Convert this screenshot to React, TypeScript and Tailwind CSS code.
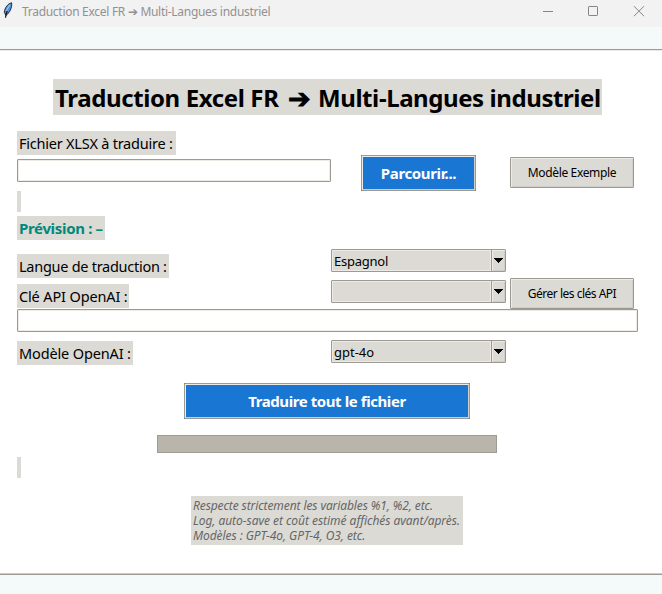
import React from "react";

function Label({ className, children }: { className: string; children?: React.ReactNode }) {
  return (
    <div className={`h-6 shrink-0 whitespace-nowrap bg-[#dcdad5] pl-[2px] leading-[24px] ${className}`}>
      {children}
    </div>
  );
}

function Entry({ className }: { className: string }) {
  return (
    <div className={`h-[23px] shrink-0 rounded-[1px] border border-[#9e9a91] ${className}`}>
      <div className="h-full border border-[#eeebe7] bg-white" />
    </div>
  );
}

function Combo({ children, className = "" }: { children?: React.ReactNode; className?: string }) {
  return (
    <div className={`flex h-[23px] w-[175px] shrink-0 rounded-[1px] border border-[#9e9a91] bg-[#dcdad5] ${className}`}>
      <div className="w-[159px] whitespace-nowrap border border-[#eeebe7] pl-[1px] text-[13px] leading-[20px]">
        {children}
      </div>
      <div className="flex w-[14px] justify-center border-l border-[#9e9a91] pt-[8px] shadow-[inset_1px_1px_0_#eeebe7,inset_-1px_-1px_0_#cfcdc8]">
        <svg width="9" height="5" viewBox="0 0 9 5" shapeRendering="crispEdges">
          <path d="M0 0h9v1H8v1H7v1H6v1H5v1H4V4H3V3H2V2H1V1H0z" fill="#000" />
        </svg>
      </div>
    </div>
  );
}

function GreyButton({ className, children }: { className: string; children: React.ReactNode }) {
  return (
    <button className={`h-[31px] w-[124px] shrink-0 whitespace-nowrap rounded-[1px] border border-[#9e9a91] bg-[#dcdad5] text-[12px] leading-[29px] shadow-[inset_1px_1px_0_#eeebe7,inset_-1px_-1px_0_#cfcdc8] ${className}`}>
      {children}
    </button>
  );
}

function BlueButton({ className, children }: { className: string; children: React.ReactNode }) {
  return (
    <button className={`h-9 shrink-0 bg-[#1976d2] ${className}`}>
      <span className="block h-full rounded-[1px] border border-[#9e9a91]">
        <span className="block h-full whitespace-nowrap border border-t-[#eeebe7] border-r-[#cfcdc8] border-b-[#cfcdc8] border-l-[#eeebe7] text-[15px] leading-[33px] font-bold text-white">
          {children}
        </span>
      </span>
    </button>
  );
}

function Feather() {
  return (
    <svg width="10" height="17" viewBox="0 0 10 17">
      <path d="M8.6.8C5 1.4 1.5 6 1.3 10.4L3 13.5C6.5 11 9.4 5.5 8.6.8z" fill="#4e8fdc" stroke="#171c25" strokeWidth="0.9" />
      <path d="M4.2 9C3.4 11 2.8 13 2.5 15.7" fill="none" stroke="#12151b" strokeWidth="1.2" />
      <path d="M6.8 2.7L3.2 8.8" stroke="#9bc8f6" strokeWidth="1.1" />
    </svg>
  );
}

export default function App() {
  return (
    <div className="flex h-[594px] w-[662px] flex-col overflow-hidden bg-white font-['Noto_Sans','Open_Sans',sans-serif] text-black">
      <header className="flex h-[27px] shrink-0 items-start bg-[#f2f2f2] text-[#919191]">
        <div className="ml-[3px] mt-[2px]"><Feather /></div>
        <span className="ml-[9px] w-[260px] whitespace-nowrap text-[12px] leading-[24px] tracking-[-0.29px]">
          Traduction Excel FR ➔ Multi-Langues industriel
        </span>
        <svg className="ml-auto mr-[17px] mt-[5px]" width="102" height="13" viewBox="0 0 102 13" fill="none" stroke="#858585">
          <path d="M0 6.5h10" />
          <rect x="45.5" y="1.5" width="9" height="9" rx="0.6" />
          <path d="M91 1.2l10 10M101 1.2l-10 10" />
        </svg>
      </header>
      <div className="h-[22px] shrink-0 bg-[#f4f9fa]" />
      <main className="flex h-[526px] shrink-0 flex-col border-t border-b border-t-[#9e9a91] border-b-[#9e9a91] pl-[17px] shadow-[inset_0_1px_0_#eeebe7,inset_0_-1px_0_#cfcdc8]">
        <h1 className="ml-[36px] mt-[29px] flex h-9 w-[549px] shrink-0 whitespace-nowrap bg-[#dcdad5] pl-[2px] text-[24px] leading-[38px] font-bold">
          <span className="w-[233px] tracking-[-0.38px]">Traduction Excel FR</span>
          <span className="w-[30px] text-[27px] leading-[37px]">➔</span>
          <span className="tracking-[-0.42px]">Multi-Langues industriel</span>
        </h1>
        <Label className="mt-4 w-[159px] text-[14.5px] tracking-[-0.23px]">Fichier XLSX à traduire :</Label>
        <div className="flex h-9 shrink-0">
          <Entry className="mt-[4px] w-[314px]" />
          <BlueButton className="ml-[30px] w-[115px] tracking-[-0.36px]">Parcourir...</BlueButton>
          <div className="ml-[34px] mt-[2px]"><GreyButton className="tracking-[-0.35px]">Modèle Exemple</GreyButton></div>
        </div>
        <div className="h-[21px] w-1 shrink-0 bg-[#dcdad5]" />
        <Label className="mt-1 w-[88px] text-[15px] font-bold tracking-[-0.33px] text-[#00897b]">Prévision : –</Label>
        <div className="mt-[9px] flex h-[29px] shrink-0">
          <Label className="mr-[162px] mt-[5px] w-[152px] text-[14.5px] tracking-[-0.27px]">Langue de traduction :</Label>
          <Combo><span className="tracking-[-0.25px]">Espagnol</span></Combo>
        </div>
        <div className="flex h-[31px] shrink-0">
          <Label className="mr-[202px] mt-[6px] w-[112px] text-[14.5px] tracking-[-0.14px]">Clé API OpenAI :</Label>
          <Combo className="mr-1 mt-[2px]" />
          <GreyButton className="tracking-[-0.5px]">Gérer les clés API</GreyButton>
        </div>
        <Entry className="w-[621px]" />
        <div className="mt-2 flex h-[25px] shrink-0">
          <Label className="mr-[198px] mt-[1px] w-[116px] text-[14.5px] tracking-[-0.14px]">Modèle OpenAI :</Label>
          <Combo>gpt-4o</Combo>
        </div>
        <BlueButton className="ml-[167px] mt-[18px] w-[286px] tracking-[-0.42px]">Traduire tout le fichier</BlueButton>
        <div className="ml-[140px] mt-4 h-[18px] w-[340px] shrink-0 border border-[#9e9a91] bg-[#bab5ab]" />
        <div className="mt-1 h-[21px] w-1 shrink-0 bg-[#dcdad5]" />
        <div className="ml-[174px] mt-[18px] h-[49px] w-[272px] shrink-0 whitespace-nowrap bg-[#dcdad5] pl-[2px] pt-[2px] text-[12px] leading-[15px] text-[#666] italic">
          <p className="tracking-[-0.1px]">Respecte strictement les variables %1, %2, etc.</p>
          <p className="tracking-[-0.04px]">Log, auto-save et coût estimé affichés avant/après.</p>
          <p className="tracking-[-0.06px]">Modèles : GPT-4o, GPT-4, O3, etc.</p>
        </div>
      </main>
      <footer className="h-[19px] shrink-0 bg-[#f4f9fa]" />
    </div>
  );
}
